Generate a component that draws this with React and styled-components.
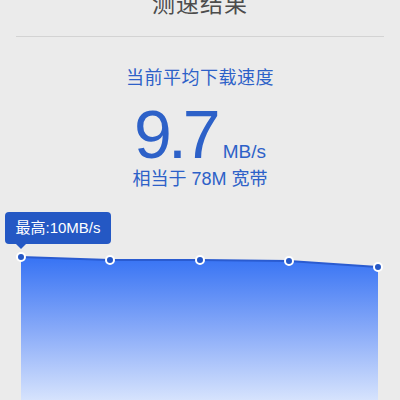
import React from "react";
import styled, { createGlobalStyle } from "styled-components";

const points = [
  [21, 52],
  [110, 55],
  [200, 55],
  [289, 56],
  [378, 62],
];

function Chart() {
  const line = points.map((p) => p.join(",")).join(" ");
  const area = `21,195 ${line} 378,195`;
  return (
    <ChartWrap>
      <svg width="400" height="195" viewBox="0 0 400 195">
        <defs>
          <linearGradient id="fill" gradientUnits="userSpaceOnUse" x1="0" y1="55" x2="0" y2="195">
            <stop offset="0" stopColor="#3a75f4" />
            <stop offset="0.5" stopColor="#88aaf8" />
            <stop offset="1" stopColor="#d6e3fd" />
          </linearGradient>
        </defs>
        <polygon points={area} fill="url(#fill)" />
        <polyline points={line} fill="none" stroke="#2a5bd0" strokeWidth="2" />
        {points.map(([x, y]) => (
          <circle key={x} cx={x} cy={y} r="4" fill="#2457c5" stroke="#fff" strokeWidth="2" />
        ))}
      </svg>
      <Tooltip>最高:10MB/s</Tooltip>
    </ChartWrap>
  );
}

export default function App() {
  return (
    <>
      <GlobalStyle />
      <Page>
        <Title>测速结果</Title>
        <Divider />
        <Label>当前平均下载速度</Label>
        <SpeedRow>
          <Speed>9.7</Speed>
          <Unit>MB/s</Unit>
        </SpeedRow>
        <Label small>相当于 78M 宽带</Label>
        <Chart />
      </Page>
    </>
  );
}

const GlobalStyle = createGlobalStyle`
  body {
    margin: 0;
    background: #ebebeb;
    font-family: "Liberation Sans", "Noto Sans CJK SC", sans-serif;
  }
`;

const Page = styled.div`
  width: 400px;
  height: 400px;
  overflow: hidden;
  display: flex;
  flex-direction: column;
  align-items: center;
  background: #ebebeb;
`;

const Title = styled.div`
  margin-top: -8px;
  font-size: 23px;
  line-height: 24px;
  color: #4c4c4c;
  letter-spacing: 1px;
`;

const Divider = styled.div`
  align-self: stretch;
  margin: 20px 16px 0;
  border-top: 1px solid #d3d3d3;
`;

const Label = styled.div`
  margin-top: ${(p) => (p.small ? "2px" : "32px")};
  font-size: 18px;
  line-height: 18px;
  color: #2d61c8;
  letter-spacing: ${(p) => (p.small ? "0" : "0.5px")};
`;

const SpeedRow = styled.div`
  margin-top: 13px;
  display: flex;
  align-items: baseline;
  color: #2d61c8;
`;

const Speed = styled.span`
  font-size: 68px;
  line-height: 68px;
  letter-spacing: -4px;
`;

const Unit = styled.span`
  margin-left: 6px;
  font-size: 19px;
`;

const ChartWrap = styled.div`
  position: relative;
  margin-top: 17px;
  align-self: stretch;
  svg {
    display: block;
  }
`;

const Tooltip = styled.div`
  position: absolute;
  left: 5px;
  top: 7px;
  width: 106px;
  height: 32px;
  border-radius: 4px;
  background: #2458c4;
  color: #fff;
  font-size: 15px;
  line-height: 32px;
  text-align: center;
  &::after {
    content: "";
    position: absolute;
    left: 11px;
    bottom: -5px;
    border-left: 5px solid transparent;
    border-right: 5px solid transparent;
    border-top: 5px solid #2458c4;
  }
`;
